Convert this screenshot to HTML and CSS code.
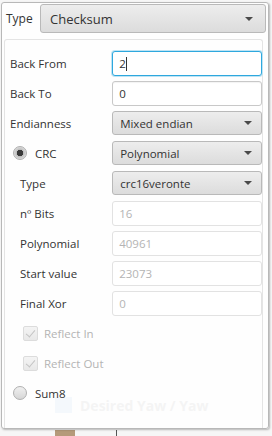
FILE: index.html
```html
<!DOCTYPE html>
<html lang="en">
<head>
  <meta charset="UTF-8">
  <title>Checksum</title>
  <link rel="stylesheet" href="styles.css">
</head>
<body>

  <!-- Contenido de fondo, visto a través del panel -->
  <div class="backdrop">
    <span class="bd-icon"></span>
    <span class="bd-title">Desired Yaw / Yaw</span>
    <span class="bd-thumb"></span>
    <span class="bd-line"></span>
  </div>

  <div class="popup">
    <div class="header">
      <span class="label">Type</span>
      <div class="combo combo-big"><span>Checksum</span><i class="arrow"></i></div>
    </div>

    <div class="content">
      <div class="row">
        <span class="label">Back From</span>
        <div class="field focused">2<span class="caret"></span></div>
      </div>
      <div class="row">
        <span class="label">Back To</span>
        <div class="field">0</div>
      </div>
      <div class="row">
        <span class="label">Endianness</span>
        <div class="combo"><span>Mixed endian</span><i class="arrow"></i></div>
      </div>
      <div class="row">
        <span class="radio-wrap"><span class="radio checked"></span>CRC</span>
        <div class="combo"><span>Polynomial</span><i class="arrow"></i></div>
      </div>
      <div class="row sub">
        <span class="label">Type</span>
        <div class="combo"><span>crc16veronte</span><i class="arrow"></i></div>
      </div>
      <div class="row sub">
        <span class="label">nº Bits</span>
        <div class="field disabled">16</div>
      </div>
      <div class="row sub">
        <span class="label">Polynomial</span>
        <div class="field disabled">40961</div>
      </div>
      <div class="row sub">
        <span class="label">Start value</span>
        <div class="field disabled">23073</div>
      </div>
      <div class="row sub">
        <span class="label">Final Xor</span>
        <div class="field disabled">0</div>
      </div>
      <div class="row sub">
        <span class="check-wrap"><span class="check"></span>Reflect In</span>
      </div>
      <div class="row sub">
        <span class="check-wrap"><span class="check"></span>Reflect Out</span>
      </div>
      <div class="row">
        <span class="radio-wrap"><span class="radio"></span>Sum8</span>
      </div>
    </div>
  </div>

</body>
</html>
```

FILE: styles.css
```css
body {
  font-family: "Open Sans", "Noto Sans", sans-serif;
  font-size: 11.5px;
  color: #333;
  margin: 0;
  background-color: #f6f6f6;
  width: 272px;
  height: 436px;
  overflow: hidden;
  position: relative;
}
/* Fondo detrás del panel */
.backdrop {
  position: absolute;
  left: 0;
  top: 0;
  width: 272px;
  height: 436px;
}
.bd-icon {
  position: absolute;
  left: 55px;
  top: 397px;
  width: 17px;
  height: 16px;
  background-color: #c4d8ee;
}
.bd-title {
  position: absolute;
  left: 80px;
  top: 396px;
  font-size: 14px;
  font-weight: bold;
  color: #c0c0c0;
}
.bd-thumb {
  position: absolute;
  left: 55px;
  top: 430px;
  width: 20px;
  height: 6px;
  background-color: #b59a7a;
}
.bd-line {
  position: absolute;
  left: 116px;
  top: 430px;
  width: 1px;
  height: 6px;
  background-color: #555;
}
.popup {
  position: relative;
  margin: 2px 0 0 1px;
  width: 266px;
  height: 425px;
  border: 1px solid #b8b8b8;
  border-radius: 3px;
  background-color: rgba(255, 255, 255, 0.82);
  box-shadow: 1px 1px 2px rgba(0, 0, 0, 0.25);
}
.header {
  display: flex;
  align-items: center;
  height: 29px;
  padding: 1px 2px 0 4px;
}
.header .label {
  width: 34px;
  font-size: 12px;
}
.content {
  margin: 6px 5px 0 2px;
  height: 380px;
  border-top: 1px solid #e4e4e4;
  border-left: 1px solid #e4e4e4;
  border-right: 1px solid #e4e4e4;
  border-radius: 3px 3px 0 0;
  padding-top: 8px;
  padding-left: 5px;
}
.row {
  display: flex;
  align-items: center;
  height: 30px;
}
.row .label {
  width: 103px;
}
.row.sub {
  padding-left: 10px;
}
.row.sub .label {
  width: 93px;
}
.field {
  box-sizing: border-box;
  width: 151px;
  height: 25px;
  padding: 0 6px;
  line-height: 23px;
  border: 1px solid #c8c8c8;
  border-radius: 3px;
  background-color: #fff;
  box-shadow: inset 0 1px 1px rgba(0, 0, 0, 0.05);
}
.field.focused {
  border: 1px solid #2ea8de;
  box-shadow: 0 0 0 1px #bfe4f4;
}
.field.disabled {
  color: #b4b4b4;
  border-color: #e2e2e2;
  box-shadow: none;
}
.caret {
  display: inline-block;
  width: 1px;
  height: 14px;
  background-color: #333;
  vertical-align: -3px;
}
.combo {
  box-sizing: border-box;
  display: flex;
  align-items: center;
  justify-content: space-between;
  width: 151px;
  height: 24px;
  padding: 0 9px 0 7px;
  border: 1px solid #b9b9b9;
  border-radius: 3px;
  background: linear-gradient(#ededed, #dcdcdc);
}
.combo-big {
  width: 226px;
  height: 29px;
  font-size: 13px;
  padding-left: 9px;
  padding-right: 12px;
}
.arrow {
  width: 0;
  height: 0;
  border-left: 4px solid transparent;
  border-right: 4px solid transparent;
  border-top: 4px solid #4a4a4a;
}
.radio-wrap, .check-wrap {
  display: flex;
  align-items: center;
  width: 103px;
}
.radio {
  box-sizing: border-box;
  width: 14px;
  height: 14px;
  margin: 0 8px 0 3px;
  border: 1px solid #b0b0b0;
  border-radius: 50%;
  background: linear-gradient(#f0f0f0, #d6d6d6);
}
.radio.checked {
  background: radial-gradient(circle, #3a3a3a 0, #3a3a3a 3px, #bdbdbd 3.5px, #dcdcdc 6px);
}
.row.sub .check-wrap {
  color: #b4b4b4;
}
.check {
  box-sizing: border-box;
  width: 15px;
  height: 15px;
  margin: 0 6px 0 3px;
  border: 1px solid #dcdcdc;
  border-radius: 2px;
  background: linear-gradient(#f4f4f4, #e8e8e8);
  position: relative;
}
.check::after {
  content: "";
  position: absolute;
  left: 4px;
  top: 1px;
  width: 4px;
  height: 8px;
  border-right: 1.5px solid #c4c4c4;
  border-bottom: 1.5px solid #c4c4c4;
  transform: rotate(40deg);
}
```
